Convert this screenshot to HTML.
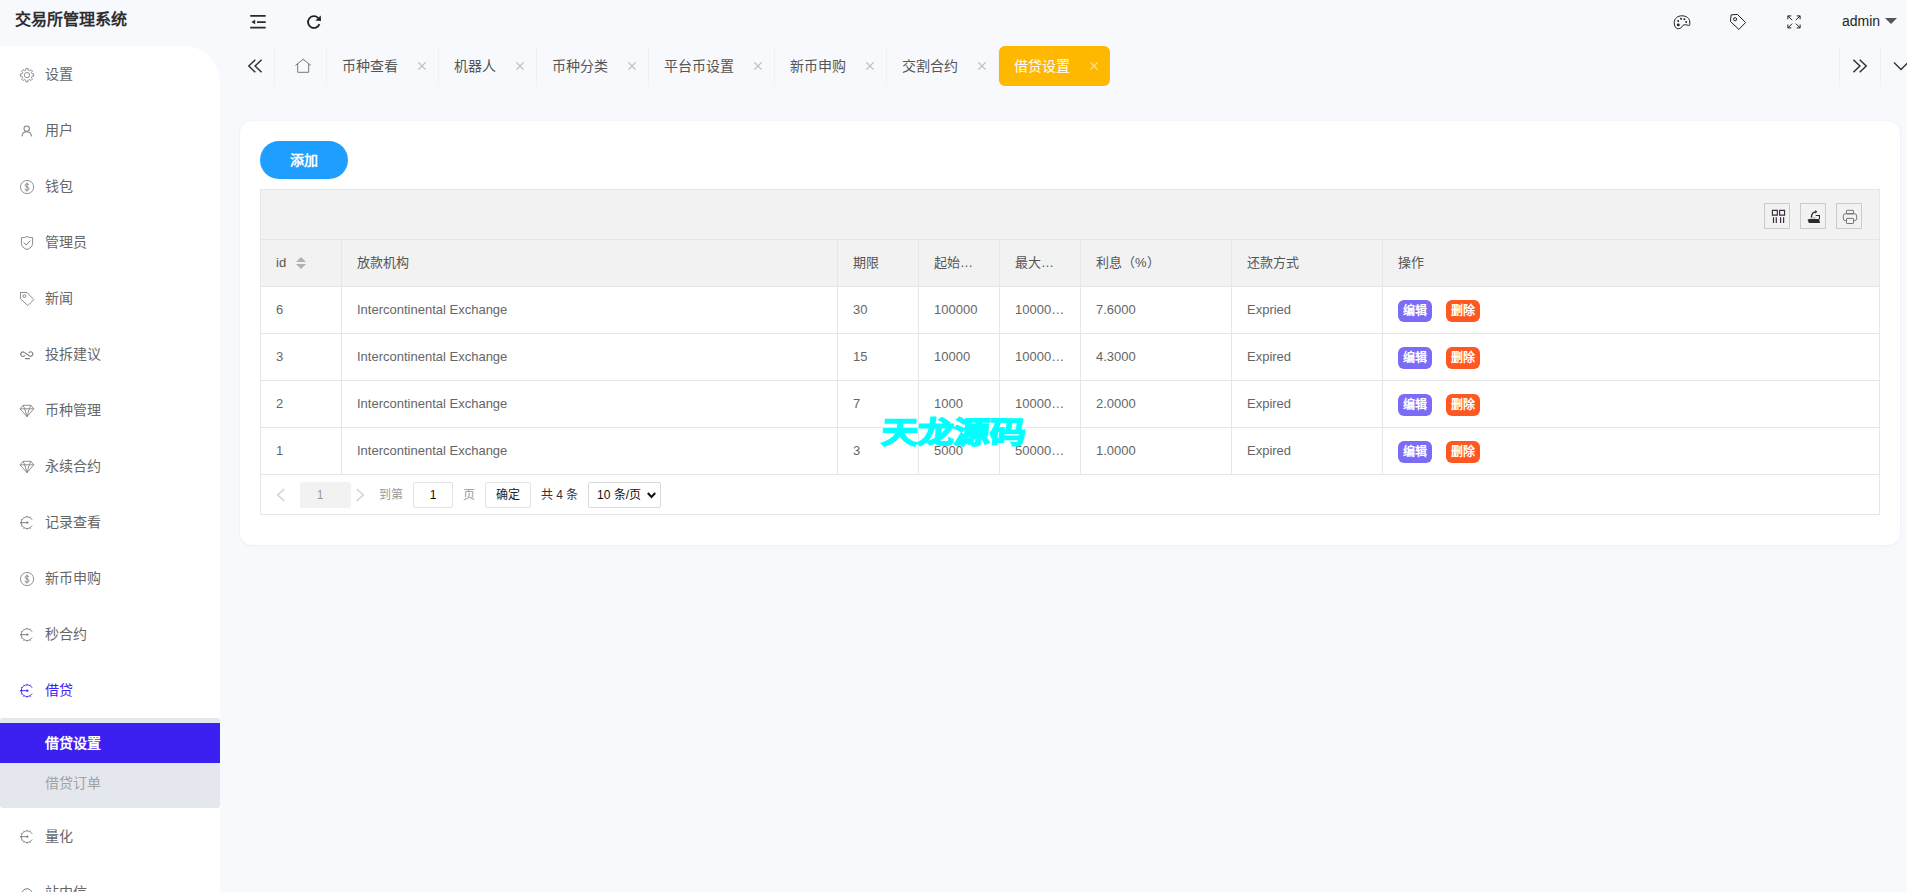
<!DOCTYPE html>
<html lang="zh-CN">
<head>
<meta charset="utf-8">
<title>交易所管理系统</title>
<style>
*{box-sizing:border-box;margin:0;padding:0}
html,body{width:1907px;height:892px;overflow:hidden}
body{background:#f8f9fd;font-family:"Liberation Sans",sans-serif;font-size:14px;color:#666;position:relative}
svg{display:block}
.abs{position:absolute}
/* header */
.logo{position:absolute;left:15px;top:9px;font-size:16px;font-weight:bold;color:#2e2e2e;line-height:22px;white-space:nowrap}
.hicon{position:absolute;color:#222}
.admin{position:absolute;left:1842px;top:12px;font-size:14px;color:#222;line-height:18px}
.caret{position:absolute;left:1885px;top:18px;width:0;height:0;border-left:6px solid transparent;border-right:6px solid transparent;border-top:6px solid #555}
/* sidebar */
.side{position:absolute;left:0;top:46px;width:220px;height:846px;background:#fff;border-top-right-radius:36px;overflow:hidden}
.mi{position:absolute;left:0;width:220px;height:56px;line-height:56px;color:#666;font-size:14px}
.mi span{position:absolute;left:45px;top:0;white-space:nowrap}
.mi svg{position:absolute;left:19px;top:20.900px;width:16px;height:16px;color:#7d7d7d}
.mi.on svg{color:#3822f8}
.mi.on{color:#3822f8}
.sub{position:absolute;left:0;top:672px;width:220px;height:90px;background:#e4e7ee;border-radius:3px}
.sub .a{position:absolute;left:0;top:5px;width:220px;height:40px;background:#3b20f1;color:#fff;font-weight:bold;line-height:40px;padding-left:45px}
.sub .b{position:absolute;left:0;top:45px;width:220px;height:40px;color:#a2a2a2;line-height:40px;padding-left:45px}
/* tabs */
.tabs{position:absolute;left:240px;top:46px;width:1667px;height:40px}
.tab{position:absolute;top:0;height:40px;line-height:40px;color:#555;font-size:14px;white-space:nowrap;border-left:1px solid #f1f1f5;padding-left:15px}
.actbg{position:absolute;left:0;top:0;width:111px;height:40px;background:#ffb800;border-radius:6px}
.tab .x{position:absolute;top:15px;width:10px;height:10px}
/* card */
.card{position:absolute;left:240px;top:121px;width:1660px;height:424px;background:#fff;border-radius:12px;box-shadow:0 0 0 1px rgba(225,228,240,.18),0 1px 2px rgba(200,205,225,.18)}
.add{position:absolute;left:20px;top:20px;width:88px;height:38px;border-radius:19px;background:#1e9fff;color:#fff;font-weight:bold;font-size:14px;line-height:38px;text-align:center}
.tbl{position:absolute;left:20px;top:68px;width:1620px;height:326px;border:1px solid #e6e6e6;background:#fff}
.tool{position:absolute;left:0;top:0;width:1618px;height:50px;background:#f2f2f2;border-bottom:1px solid #e6e6e6}
.tbtn{position:absolute;top:13px;width:26px;height:26px;border:1px solid #ccc}
.tbtn svg{position:absolute;left:6px;top:5px;width:16px;height:16px}
.hr{position:absolute;left:0;width:1618px;height:47px;border-bottom:1px solid #e6e6e6}
.hr.h{background:#f2f2f2;color:#555}
.c{position:absolute;top:0;height:46px;line-height:45px;font-size:13px;padding-left:15px;border-right:1px solid #e6e6e6;white-space:nowrap;overflow:hidden;color:#666}
.h .c{color:#555}
.c1{left:0;width:81px}.c2{left:81px;width:496px}.c3{left:577px;width:81px}.c4{left:658px;width:81px}
.c5{left:739px;width:81px}.c6{left:820px;width:151px}.c7{left:971px;width:151px}.c8{left:1122px;width:496px;border-right:none}
.b1,.b2{position:absolute;top:13px;height:22px;width:34px;border-radius:6px;color:#fff;font-size:12px;font-weight:bold;line-height:22px;text-align:center;padding:0}
.b1{left:15px;background:#7b6cf6}.b2{left:63px;background:#ff5722}
.pg{position:absolute;left:0;top:285px;width:1618px;height:39px;font-size:12px;color:#999}
.wm{position:absolute;left:882px;top:410px;font-size:30px;line-height:46px;font-weight:bold;color:#00ffff;-webkit-text-stroke:1.7px #00ffff;white-space:nowrap;transform-origin:0 50%;transform:scaleX(1.2) skewX(-3deg)}
.sort{position:absolute;left:35px;top:17px;width:10px;height:14px}
.sort:before,.sort:after{content:"";position:absolute;left:0;border-left:5px solid transparent;border-right:5px solid transparent}
.sort:before{top:0;border-bottom:5px solid #b2b2b2}.sort:after{top:7px;border-top:5px solid #b2b2b2}
</style>
</head>
<body>
<svg width="0" height="0" style="position:absolute">
<symbol id="i-gear" viewBox="0 0 16 16"><g fill="none" stroke="currentColor" stroke-width=".85" stroke-linejoin="round"><circle cx="8" cy="8.1" r="2.6"/><path d="M6.76 3.10L6.94 1.43L9.06 1.43L9.24 3.10L10.66 3.69L11.97 2.64L13.46 4.13L12.41 5.44L13.00 6.86L14.67 7.04L14.67 9.16L13.00 9.34L12.41 10.76L13.46 12.07L11.97 13.56L10.66 12.51L9.24 13.10L9.06 14.77L6.94 14.77L6.76 13.10L5.34 12.51L4.03 13.56L2.54 12.07L3.59 10.76L3.00 9.34L1.33 9.16L1.33 7.04L3.00 6.86L3.59 5.44L2.54 4.13L4.03 2.64L5.34 3.69z"/></g></symbol>
<symbol id="i-user" viewBox="0 0 16 16"><g fill="none" stroke="currentColor" stroke-width="1.05"><circle cx="7.7" cy="5.6" r="2.7"/><path d="M2.9 13.4c.3-2.9 2.1-4.7 4.8-4.700s4.5 1.8 4.8 4.7"/></g></symbol>
<symbol id="i-dollar" viewBox="0 0 16 16"><g fill="none" stroke="currentColor" stroke-width=".85"><circle cx="8.05" cy="8" r="6.6"/><path d="M9.9 6.300c-.2-.9-.9-1.4-1.9-1.4-1.1 0-1.9.6-1.9 1.5 0 2.1 3.9 1 3.9 3.3 0 .9-.8 1.5-2 1.5-1.1 0-1.9-.5-2.1-1.500M8 3.500v9" stroke-width=".9"/></g></symbol>
<symbol id="i-shield" viewBox="0 0 16 16"><g fill="none" stroke="currentColor" stroke-width=".9" stroke-linejoin="round"><path d="M8 1.500c1.8 1 3.7 1.2 5.6 1.200v5.700c0 3-2.5 4.9-5.6 6.2-3.1-1.3-5.6-3.2-5.6-6.200V2.700c1.9 0 3.8-.2 5.6-1.200z"/><path d="M4.7 7.600l2.5 2.3 4-4.2" stroke-width="1"/></g></symbol>
<symbol id="i-tag" viewBox="0 0 16 16"><g fill="none" stroke="currentColor" stroke-width=".9" stroke-linejoin="round"><path d="M1.5 1.500h6.500l6.8 7.1-6 6L1.4 7.700z"/><circle cx="5.4" cy="5.1" r="1.4"/></g></symbol>
<symbol id="i-link" viewBox="0 0 16 16"><g fill="none" stroke="currentColor" stroke-width="1.05" stroke-linecap="round"><path d="M5.7 8.500A2.2 2.2 0 1 1 5.3 5.400L10.3 8.800A2.2 2.2 0 1 0 10 5.6"/><path d="M6.4 11.600h4.2"/></g></symbol>
<symbol id="i-diamond" viewBox="0 0 16 16"><g fill="none" stroke="currentColor" stroke-width=".85" stroke-linejoin="round"><path d="M4.1 2.300h7.700l3 3.500L8 13.7 1.1 5.800z"/><path d="M1.1 5.800h13.700M5.7 5.800L8 13.700l2.3-7.900M4.1 2.300l1.6 3.500M11.8 2.300l-1.5 3.5"/></g></symbol>
<symbol id="i-clock" viewBox="0 0 16 16"><g fill="none" stroke="currentColor" stroke-width=".9"><path d="M13.15 4.800A5.85 5.85 0 1 0 13.15 10.6"/><path d="M11.05 12.81L11.55 13.68M8.10 13.60L8.10 14.60M5.15 12.81L4.65 13.68M2.99 10.65L2.12 11.15M2.20 7.70L1.20 7.70M2.99 4.75L2.12 4.25M5.15 2.59L4.65 1.72M8.10 1.80L8.10 0.80M11.05 2.59L11.55 1.72" stroke-width=".9"/><path d="M1.1 7.700h6.5" stroke-width="1"/><circle cx="8.3" cy="7.7" r="1.15" fill="currentColor" stroke="none"/></g></symbol>
<symbol id="i-bell" viewBox="0 0 16 16"><g fill="none" stroke="currentColor" stroke-width="1"><path d="M3 13.500V8.700a5 5 0 0 1 10 0v4.800z"/></g></symbol>
</svg>
<!-- HEADER -->
<div class="logo">交易所管理系统</div>
<!-- flexible / refresh -->
<svg class="hicon" style="left:250px;top:14px;width:16px;height:16px" viewBox="0 0 16 16" fill="none" stroke="#2a2a2a" stroke-width="1.75"><path d="M0.2 1.95h15.500M7 8h8.700M0.2 13.500h15.5"/><path d="M5.2 5.800L1.3 8l3.9 2.200z" fill="#2a2a2a" stroke="none"/></svg>
<svg class="hicon" style="left:306px;top:13px;width:16px;height:17px" viewBox="0 0 16 17" fill="none" stroke="#222" stroke-width="1.8"><path d="M13.46 11.080A5.9 5.9 0 1 1 12.11 4.83"/><path d="M14.75 2.400L15 7.9 9.3 7.400z" fill="#222" stroke="none"/></svg>
<!-- right icons -->
<svg class="hicon" style="left:1673px;top:14px;width:18px;height:16px" viewBox="0 0 18 16" fill="none" stroke="#222" stroke-width="1"><path d="M1.2 8.600C1.2 4.5 4.6 1.8 9 1.800S16.8 4.4 16.8 8C16.8 9.6 16.9 10.9 16.5 11.4 15.3 11.6 13 10.3 10.9 10.9 9.4 11.4 9.4 12.5 8.6 13.3 7.7 14.2 6.2 14.8 4.8 14.7 2.7 14.5 1.2 12 1.2 8.600z"/><g fill="#222" stroke="none"><circle cx="5.3" cy="10.9" r="1.45"/><circle cx="5.2" cy="7.1" r="1"/><circle cx="8.05" cy="4.8" r="1"/><circle cx="11.35" cy="5.3" r="1"/><circle cx="13.2" cy="8.05" r=".95"/></g></svg>
<svg class="hicon" style="left:1729px;top:13px;width:18px;height:18px" viewBox="0 0 18 18" fill="none" stroke="#222" stroke-width="1" stroke-linejoin="round"><path d="M2.1 1.900L8.4 1.400l8.2 8.1-6.75 6.900L1.5 8.500z"/><circle cx="6.1" cy="6.2" r="1.55"/></svg>
<svg class="hicon" style="left:1787px;top:15px;width:14px;height:14px" viewBox="0 0 14 14" fill="none" stroke="#222" stroke-width="1"><path d="M.9 4.300V.9h3.400M.9.900l4.3 4.300M13.1 4.300V.9H9.700M13.1.9L8.8 5.200M.9 9.500v3.400h3.400M.9 12.900l4.3-4.300M13.1 9.500v3.400H9.700M13.1 12.900L8.8 8.6"/></svg>
<div class="admin">admin</div><div class="caret"></div>

<!-- SIDEBAR -->
<div class="side" id="side">
<div class="mi" style="top:0px"><svg><use href="#i-gear"/></svg><span>设置</span></div>
<div class="mi" style="top:56px"><svg><use href="#i-user"/></svg><span>用户</span></div>
<div class="mi" style="top:112px"><svg><use href="#i-dollar"/></svg><span>钱包</span></div>
<div class="mi" style="top:168px"><svg><use href="#i-shield"/></svg><span>管理员</span></div>
<div class="mi" style="top:224px"><svg><use href="#i-tag"/></svg><span>新闻</span></div>
<div class="mi" style="top:280px"><svg><use href="#i-link"/></svg><span>投拆建议</span></div>
<div class="mi" style="top:336px"><svg><use href="#i-diamond"/></svg><span>币种管理</span></div>
<div class="mi" style="top:392px"><svg><use href="#i-diamond"/></svg><span>永续合约</span></div>
<div class="mi" style="top:448px"><svg><use href="#i-clock"/></svg><span>记录查看</span></div>
<div class="mi" style="top:504px"><svg><use href="#i-dollar"/></svg><span>新币申购</span></div>
<div class="mi" style="top:560px"><svg><use href="#i-clock"/></svg><span>秒合约</span></div>
<div class="mi on" style="top:616px"><svg><use href="#i-clock"/></svg><span>借贷</span></div>
<div class="sub"><div class="a">借贷设置</div><div class="b">借贷订单</div></div>
<div class="mi" style="top:762px"><svg><use href="#i-clock"/></svg><span>量化</span></div>
<div class="mi" style="top:818px"><svg><use href="#i-bell"/></svg><span>站内信</span></div>
</div>

<!-- TABS -->
<div class="tabs" id="tabs">
<svg class="abs" style="left:7px;top:12px;width:16px;height:16px" viewBox="0 0 16 16" fill="none" stroke="#333" stroke-width="1.5"><path d="M8.3 1.700L1.8 8l6.5 6.300M14.6 1.700L8.1 8l6.5 6.3"/></svg>
<div class="tab" style="left:34px;width:52px"><svg class="abs" style="left:19px;top:12px;width:18px;height:16px" viewBox="0 0 18 16" fill="none" stroke="#777" stroke-width="1" stroke-linejoin="miter"><path d="M1.5 7.400L9.1 1.300l7.7 6.100M3.7 5.700v8.600h11V5.7"/></svg></div>
<div class="tab" style="left:86px;width:112px">币种查看<svg class="x" style="left:90px" viewBox="0 0 10 10" stroke="#bcbcbc" stroke-width="1.25" fill="none"><path d="M1.4 1.4l7.2 7.200M8.6 1.400l-7.2 7.2"/></svg></div>
<div class="tab" style="left:198px;width:98px">机器人<svg class="x" style="left:76px" viewBox="0 0 10 10" stroke="#bcbcbc" stroke-width="1.25" fill="none"><path d="M1.4 1.4l7.2 7.200M8.6 1.400l-7.2 7.2"/></svg></div>
<div class="tab" style="left:296px;width:112px">币种分类<svg class="x" style="left:90px" viewBox="0 0 10 10" stroke="#bcbcbc" stroke-width="1.25" fill="none"><path d="M1.4 1.4l7.2 7.200M8.6 1.400l-7.2 7.2"/></svg></div>
<div class="tab" style="left:408px;width:126px">平台币设置<svg class="x" style="left:104px" viewBox="0 0 10 10" stroke="#bcbcbc" stroke-width="1.25" fill="none"><path d="M1.4 1.4l7.2 7.200M8.6 1.400l-7.2 7.2"/></svg></div>
<div class="tab" style="left:534px;width:112px">新币申购<svg class="x" style="left:90px" viewBox="0 0 10 10" stroke="#bcbcbc" stroke-width="1.25" fill="none"><path d="M1.4 1.4l7.2 7.200M8.6 1.400l-7.2 7.2"/></svg></div>
<div class="tab" style="left:646px;width:112px">交割合约<svg class="x" style="left:90px" viewBox="0 0 10 10" stroke="#bcbcbc" stroke-width="1.25" fill="none"><path d="M1.4 1.4l7.2 7.200M8.6 1.400l-7.2 7.2"/></svg></div>
<div class="tab" style="left:758px;width:112px"><div class="actbg"></div><span style="position:relative;color:#fff">借贷设置</span><svg class="x" style="left:90px" viewBox="0 0 10 10" stroke="#ffe29a" stroke-width="1.25" fill="none"><path d="M1.4 1.4l7.2 7.200M8.6 1.400l-7.2 7.2"/></svg></div>
<div class="tab" style="left:1599px;width:41px"><svg class="abs" style="left:12px;top:12px;width:16px;height:16px" viewBox="0 0 16 16" fill="none" stroke="#333" stroke-width="1.5"><path d="M7.7 1.700L14.2 8l-6.5 6.300M1.4 1.700L7.9 8l-6.5 6.3"/></svg></div>
<div class="tab" style="left:1640px;width:27px"><svg class="abs" style="left:12px;top:15px;width:16px;height:10px" viewBox="0 0 16 10" fill="none" stroke="#333" stroke-width="1.4"><path d="M1 1.500l7 7 7-7"/></svg></div>
</div>

<!-- CARD -->
<div class="card">
  <div class="add">添加</div>
  <div class="tbl" id="tbl">
    <div class="tool">
<div class="tbtn" style="left:1503px"><svg viewBox="0 0 16 16" fill="none" stroke="#3a2b3f" stroke-width="1.15"><path d="M1.4 1.400h4.950v4.650H1.400zM8.6 1.400h4.950v4.650H8.600z"/><path d="M2.5 8.300v5.800M5.3 8.300v5.800M9.6 8.300v5.800M12.6 8.300v5.8" stroke-width="1.2"/></svg></div>
<div class="tbtn" style="left:1539px"><svg viewBox="0 0 16 16" fill="#2b2b2b" stroke="none"><path d="M2.6 10h9.500l.9 4.100H1.800l-1.2-3.500z"/><path d="M8.7 6.450h3.750V10.2" fill="none" stroke="#2b2b2b" stroke-width="1.1"/><path d="M3.2 8.900h5.5" fill="none" stroke="#999" stroke-width=".9"/><path d="M4.4 8.200C4.6 5 6 3 8.6 2.8" fill="none" stroke="#2b2b2b" stroke-width="1.35"/><path d="M8.2 1l2.1 1.8-2.1 1.900z"/></svg></div>
<div class="tbtn" style="left:1575px"><svg style="left:5px" viewBox="0 0 16 16" fill="none" stroke="#737373" stroke-width="1"><rect x="1.3" y="4.8" width="13.4" height="6.8" rx="2"/><rect x="4.5" y="1.3" width="7" height="3.5" rx=".6"/><rect x="4.5" y="9.4" width="7" height="5.1" rx=".6" fill="#f2f2f2"/></svg></div>
</div>
<div class="hr h" style="top:50px"><div class="c c1">id<i class="sort"></i></div><div class="c c2">放款机构</div><div class="c c3">期限</div><div class="c c4">起始…</div><div class="c c5">最大…</div><div class="c c6">利息（%）</div><div class="c c7">还款方式</div><div class="c c8">操作</div></div>
<div class="hr" style="top:97px"><div class="c c1">6</div><div class="c c2">Intercontinental Exchange</div><div class="c c3">30</div><div class="c c4">100000</div><div class="c c5">10000…</div><div class="c c6">7.6000</div><div class="c c7">Expried</div><div class="c c8"><div class="b1">编辑</div><div class="b2">删除</div></div></div>
<div class="hr" style="top:144px"><div class="c c1">3</div><div class="c c2">Intercontinental Exchange</div><div class="c c3">15</div><div class="c c4">10000</div><div class="c c5">10000…</div><div class="c c6">4.3000</div><div class="c c7">Expired</div><div class="c c8"><div class="b1">编辑</div><div class="b2">删除</div></div></div>
<div class="hr" style="top:191px"><div class="c c1">2</div><div class="c c2">Intercontinental Exchange</div><div class="c c3">7</div><div class="c c4">1000</div><div class="c c5">10000…</div><div class="c c6">2.0000</div><div class="c c7">Expired</div><div class="c c8"><div class="b1">编辑</div><div class="b2">删除</div></div></div>
<div class="hr" style="top:238px"><div class="c c1">1</div><div class="c c2">Intercontinental Exchange</div><div class="c c3">3</div><div class="c c4">5000</div><div class="c c5">50000…</div><div class="c c6">1.0000</div><div class="c c7">Expired</div><div class="c c8"><div class="b1">编辑</div><div class="b2">删除</div></div></div>
<div class="pg">
<svg class="abs" style="left:15px;top:13px;width:10px;height:14px" viewBox="0 0 10 14" fill="none" stroke="#cfcfcf" stroke-width="1.4"><path d="M8.3 1L1.6 7l6.7 6"/></svg>
<div class="abs" style="left:39px;top:7px;width:51px;height:26px;background:#f2f2f2;border-radius:3px;line-height:26px;text-align:center;color:#999;padding-right:11px">1</div>
<svg class="abs" style="left:94px;top:13px;width:10px;height:14px" viewBox="0 0 10 14" fill="none" stroke="#cfcfcf" stroke-width="1.4"><path d="M1.7 1l6.7 6-6.7 6"/></svg>
<div class="abs" style="left:118px;top:7px;line-height:26px;color:#999">到第</div>
<div class="abs" style="left:152px;top:7px;width:40px;height:26px;border:1px solid #e2e2e2;border-radius:2px;line-height:24px;text-align:center;color:#111;background:#fff">1</div>
<div class="abs" style="left:202px;top:7px;line-height:26px;color:#999">页</div>
<div class="abs" style="left:224px;top:7px;width:46px;height:26px;border:1px solid #e2e2e2;border-radius:2px;line-height:24px;text-align:center;color:#222;background:#fff">确定</div>
<div class="abs" style="left:280px;top:7px;line-height:26px;color:#333">共 4 条</div>
<div class="abs" style="left:327px;top:7px;width:73px;height:26px;border:1px solid #dadada;border-radius:2px;line-height:24px;padding-left:8px;color:#111;background:#fff">10 条/页<svg class="abs" style="left:58px;top:9px;width:9px;height:7px" viewBox="0 0 9 7" fill="none" stroke="#111" stroke-width="2"><path d="M.8 1l3.7 4 3.7-4"/></svg></div>
</div>
  </div>
</div>

<div class="wm">天龙源码</div>
</body>
</html>
